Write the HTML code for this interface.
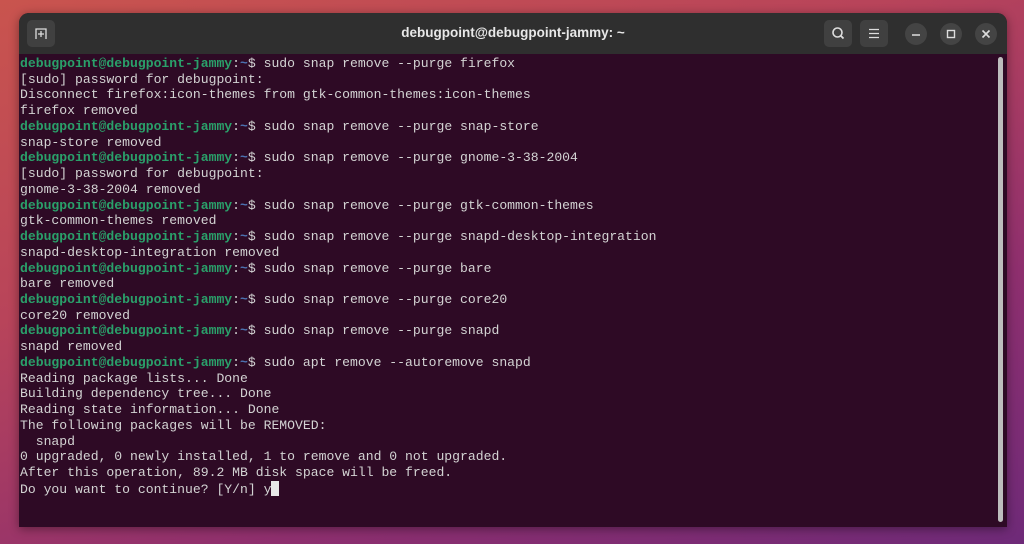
<!DOCTYPE html>
<html><head><meta charset="utf-8"><style>
html,body{margin:0;padding:0;width:1024px;height:544px;overflow:hidden}
body{background:linear-gradient(160deg,#c9544e 0%,#b8445a 35%,#8e2f6e 70%,#6e2a78 100%);position:relative;font-family:"Liberation Sans",sans-serif}
.win{position:absolute;left:19px;top:13px;width:988px;height:514px;border-radius:10px 10px 0 0;overflow:hidden;background:#2e0a25;box-shadow:0 2px 10px rgba(0,0,0,.4)}
.hdr{position:absolute;left:0;top:0;width:100%;height:41px;background:#2f2f2f}
.title{position:absolute;left:0;width:100%;top:12px;text-align:center;color:#e8e8e8;font-weight:bold;font-size:13.5px}
.btn{position:absolute;top:7px;width:28px;height:27px;background:#404040;border-radius:5px}
.circ{position:absolute;top:10px;width:22px;height:22px;border-radius:50%;background:#444}
.term{position:absolute;left:1px;top:43px;font-family:"Liberation Mono",monospace;font-size:13.1px;line-height:15.74px;color:#d3d3d3;white-space:pre}
.g{color:#2aa06a;font-weight:bold}.b{color:#4c72b0;font-weight:bold}
.cur{background:#e8e8e8;display:inline-block;width:8px;height:15px;vertical-align:-3px}
.sb{position:absolute;left:979px;top:44px;width:5px;height:465px;background:#bdbdbd;border-radius:3px}
</style></head><body>
<div class="win">
<div class="hdr">
<div class="btn" style="left:8px"><svg width="28" height="27"><path d="M9 19V9h10v10M14 11v6M11 14h6" stroke="#ddd" stroke-width="1.3" fill="none"/></svg></div>
<div class="title">debugpoint@debugpoint-jammy: ~</div>
<div class="btn" style="left:805px"><svg width="28" height="27"><circle cx="13.5" cy="12.5" r="4.5" stroke="#ddd" stroke-width="1.6" fill="none"/><path d="M16.5 15.5l3 3" stroke="#ddd" stroke-width="1.8"/></svg></div>
<div class="btn" style="left:841px"><svg width="28" height="27"><path d="M9 9.5h10M9 13.5h10M9 17.5h10" stroke="#ddd" stroke-width="1.3"/></svg></div>
<div class="circ" style="left:886px"><svg width="22" height="22"><path d="M7 12h8" stroke="#ddd" stroke-width="1.5"/></svg></div>
<div class="circ" style="left:921px"><svg width="22" height="22"><rect x="7.5" y="7.5" width="7" height="7" stroke="#ddd" stroke-width="1.4" fill="none"/></svg></div>
<div class="circ" style="left:956px"><svg width="22" height="22"><path d="M7.5 7.5l7 7M14.5 7.5l-7 7" stroke="#ddd" stroke-width="1.6"/></svg></div>
</div>
<div class="term"><span class="g">debugpoint@debugpoint-jammy</span>:<span class="b">~</span>$ sudo snap remove --purge firefox
[sudo] password for debugpoint:
Disconnect firefox:icon-themes from gtk-common-themes:icon-themes
firefox removed
<span class="g">debugpoint@debugpoint-jammy</span>:<span class="b">~</span>$ sudo snap remove --purge snap-store
snap-store removed
<span class="g">debugpoint@debugpoint-jammy</span>:<span class="b">~</span>$ sudo snap remove --purge gnome-3-38-2004
[sudo] password for debugpoint:
gnome-3-38-2004 removed
<span class="g">debugpoint@debugpoint-jammy</span>:<span class="b">~</span>$ sudo snap remove --purge gtk-common-themes
gtk-common-themes removed
<span class="g">debugpoint@debugpoint-jammy</span>:<span class="b">~</span>$ sudo snap remove --purge snapd-desktop-integration
snapd-desktop-integration removed
<span class="g">debugpoint@debugpoint-jammy</span>:<span class="b">~</span>$ sudo snap remove --purge bare
bare removed
<span class="g">debugpoint@debugpoint-jammy</span>:<span class="b">~</span>$ sudo snap remove --purge core20
core20 removed
<span class="g">debugpoint@debugpoint-jammy</span>:<span class="b">~</span>$ sudo snap remove --purge snapd
snapd removed
<span class="g">debugpoint@debugpoint-jammy</span>:<span class="b">~</span>$ sudo apt remove --autoremove snapd
Reading package lists... Done
Building dependency tree... Done
Reading state information... Done
The following packages will be REMOVED:
  snapd
0 upgraded, 0 newly installed, 1 to remove and 0 not upgraded.
After this operation, 89.2 MB disk space will be freed.
Do you want to continue? [Y/n] y<span class="cur"></span></div>
<div class="sb"></div>
</div>
</body></html>
